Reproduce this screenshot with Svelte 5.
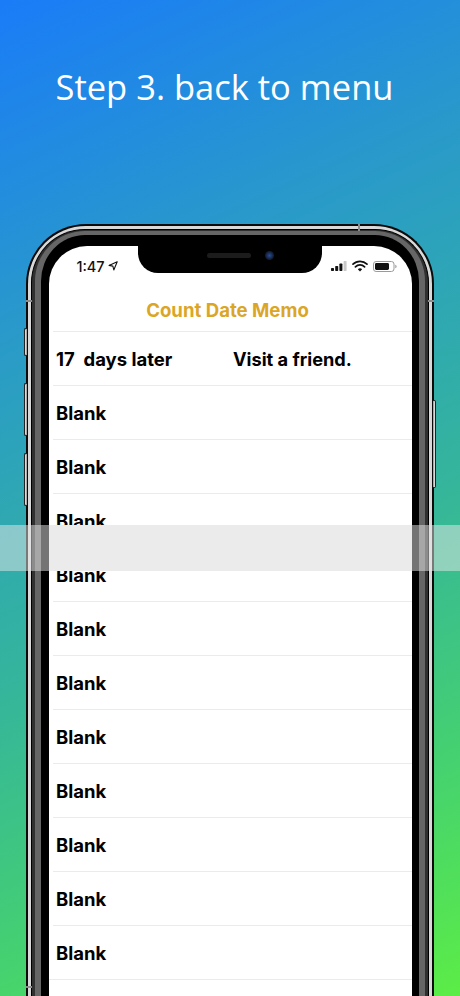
<script lang="ts">
    const rows = Array.from({ length: 11 }, (_, i) => i);
</script>

<div class="page">
    <h1 class="caption">Step 3. back to menu</h1>

    <div class="phone">
        <span class="side-btn left mute"></span>
        <span class="side-btn left vol-up"></span>
        <span class="side-btn left vol-down"></span>
        <span class="side-btn right power"></span>
        <span class="antenna top-tick"></span>
        <span class="antenna side-tick tick-left"></span>
        <span class="antenna side-tick tick-right"></span>
        <span class="antenna side-tick tick-low"></span>

        <div class="rim">
            <div class="band">
                <div class="bezel">
                    <div class="screen">
                        <div class="status">
                            <div class="status-left">
                                <span class="time">1:47</span>
                                <svg class="loc" viewBox="0 0 10 10" aria-hidden="true">
                                    <path d="M9.2.8 1 4.4l3.9.7.9 3.9z" fill="none" stroke="#111" stroke-width="1.1" stroke-linejoin="round" />
                                </svg>
                            </div>
                            <div class="notch">
                                <span class="speaker"></span>
                                <span class="camera"></span>
                            </div>
                            <div class="status-right">
                                <svg class="signal" viewBox="0 0 16 10" aria-hidden="true">
                                    <rect x="0" y="7" width="3" height="3" rx=".7" fill="#111" />
                                    <rect x="4.2" y="5" width="3" height="5" rx=".7" fill="#111" />
                                    <rect x="8.4" y="2.6" width="3" height="7.4" rx=".7" fill="#111" />
                                    <rect x="12.6" y="0" width="3" height="10" rx=".7" fill="#c9c9c9" />
                                </svg>
                                <svg class="wifi" viewBox="0 0 16 12" aria-hidden="true">
                                    <path d="M1 4.2a10 10 0 0 1 14 0M3.4 6.8a6.6 6.6 0 0 1 9.2 0" fill="none" stroke="#111" stroke-width="1.7" stroke-linecap="round" />
                                    <path d="M8 11.6 5.8 9.2a3.2 3.2 0 0 1 4.4 0z" fill="#111" />
                                </svg>
                                <svg class="battery" viewBox="0 0 24 11" aria-hidden="true">
                                    <rect x=".5" y=".5" width="20.5" height="10" rx="2.6" fill="none" stroke="#9a9a9a" />
                                    <rect x="2" y="2" width="14" height="7" rx="1.4" fill="#111" />
                                    <path d="M22.3 3.8c.9.3 1.3.9 1.3 1.7s-.4 1.4-1.3 1.7z" fill="#9a9a9a" />
                                </svg>
                            </div>
                        </div>

                        <div class="title">Count Date Memo</div>

                        <ul class="memo-list">
                            <li class="memo-row">
                                <span class="days">17&nbsp; days later</span>
                                <span class="memo">Visit a friend.</span>
                            </li>
                            {#each rows as row (row)}
                                <li class="memo-row">Blank</li>
                            {/each}
                        </ul>
                    </div>
                </div>
            </div>
        </div>
    </div>

    <div class="swipe-band">
        <div class="swipe-patch"></div>
    </div>
</div>

<style>
    :global(body) {
        margin: 0;
    }

    .page {
        position: relative;
        width: 460px;
        height: 996px;
        overflow: hidden;
        background: linear-gradient(155deg, #1a7cf8 0%, #2a9cc6 30%, #35b69a 58%, #45d170 80%, #5ced46 100%);
        font-family: Inter, "Liberation Sans", sans-serif;
    }

    .caption {
        margin: 0;
        padding: 65px 11px 0 0;
        height: 224px;
        box-sizing: border-box;
        text-align: center;
        font-family: "Open Sans", "Liberation Sans", sans-serif;
        font-size: 34.5px;
        line-height: 44px;
        font-weight: 400;
        color: #fff;
    }

    .phone {
        position: relative;
        width: 408px;
        margin-left: 26px;
    }

    .side-btn {
        position: absolute;
        width: 2px;
        background: linear-gradient(90deg, #f2f2f2, #8f8f8f);
        border: 1px solid #222;
        border-right: none;
        border-radius: 2px 0 0 2px;
    }

    .side-btn.left {
        left: -2px;
    }

    .side-btn.mute {
        top: 104px;
        height: 26px;
    }

    .side-btn.vol-up {
        top: 159px;
        height: 51px;
    }

    .side-btn.vol-down {
        top: 229px;
        height: 51px;
    }

    .side-btn.power {
        right: -2px;
        top: 176px;
        height: 86px;
        border: 1px solid #222;
        border-left: none;
        border-radius: 0 2px 2px 0;
        background: linear-gradient(90deg, #8f8f8f, #f2f2f2);
    }

    .antenna {
        position: absolute;
        z-index: 1;
        background: #8c8c8c;
    }

    .top-tick {
        left: 332px;
        top: 0;
        width: 2px;
        height: 7px;
    }

    .side-tick {
        width: 6px;
        height: 2px;
    }

    .tick-left {
        left: 0;
        top: 76px;
    }

    .tick-right {
        right: 0;
        top: 76px;
    }

    .tick-low {
        left: 0;
        top: 762px;
    }

    .rim {
        border: 2px solid #0a0a0a;
        border-bottom: none;
        border-radius: 60px 60px 0 0;
        background: #d9d9d9;
        padding: 3px 3px 0;
    }

    .band {
        border: 1px solid #000;
        border-bottom: none;
        border-radius: 54px 54px 0 0;
        background: #303030;
        padding: 1px 3px 0;
    }

    .bezel {
        border: solid #666;
        border-width: 4px 6px 0;
        border-radius: 50px 50px 0 0;
        background: #000;
        padding: 11px 7px 0 8px;
    }

    .screen {
        height: 760px;
        overflow: hidden;
        background: #fff;
        border-radius: 38px 38px 0 0;
    }

    .status {
        display: flex;
        height: 27px;
        justify-content: space-between;
    }

    .status-left {
        width: 89px;
        display: flex;
        align-items: center;
        justify-content: center;
        gap: 3px;
        padding-top: 13px;
        padding-left: 7px;
        box-sizing: border-box;
        height: 27px;
    }

    .time {
        font-size: 14.5px;
        font-weight: 500;
        color: #111;
    }

    .loc {
        width: 10px;
        height: 10px;
    }

    .notch {
        flex: 1;
        height: 27px;
        box-sizing: border-box;
        padding: 0 0 8px 20px;
        background: #000;
        border-radius: 0 0 20px 20px;
        display: flex;
        align-items: center;
        justify-content: center;
        gap: 14px;
    }

    .speaker {
        width: 44px;
        height: 5px;
        border-radius: 3px;
        background: #1c1c1c;
    }

    .camera {
        width: 9px;
        height: 9px;
        border-radius: 50%;
        background: radial-gradient(circle, #2a4f9a 0%, #14223f 55%, #0a0a12 100%);
    }

    .status-right {
        width: 90px;
        display: flex;
        align-items: center;
        justify-content: center;
        gap: 5px;
        padding-top: 13px;
        padding-right: 6px;
        box-sizing: border-box;
        height: 27px;
    }

    .signal {
        width: 16px;
        height: 10px;
    }

    .wifi {
        width: 16px;
        height: 12px;
    }

    .battery {
        width: 24px;
        height: 11px;
    }

    .title {
        height: 58px;
        box-sizing: border-box;
        padding: 26px 6px 0 0;
        text-align: center;
        font-size: 18.6px;
        line-height: 22px;
        font-weight: 700;
        color: #dba626;
    }

    .memo-list {
        list-style: none;
        margin: 0;
        padding: 0;
        border-bottom: 1px solid #ebebeb;
    }

    .memo-row {
        display: flex;
        align-items: center;
        height: 54px;
        box-sizing: border-box;
        margin-left: 4px;
        padding-left: 3px;
        border-top: 1px solid #ebebeb;
        font-size: 18.5px;
        font-weight: 700;
        color: #000;
    }

    .days {
        width: 177px;
    }

    .memo {
        font-size: 18.2px;
    }

    .swipe-band {
        position: absolute;
        left: 0;
        right: 0;
        top: 525px;
        height: 46px;
        background: rgba(232, 232, 232, 0.5);
    }

    .swipe-patch {
        margin-left: 49px;
        width: 363px;
        height: 100%;
        background: #ebebeb;
    }
</style>
